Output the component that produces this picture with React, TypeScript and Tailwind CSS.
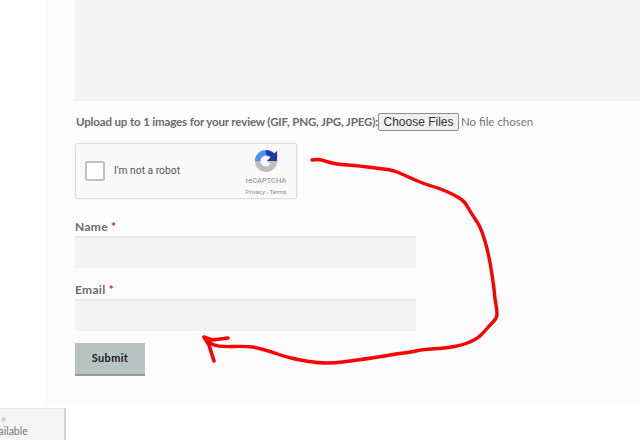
const pts: [number, number][] = [
  [312, 160], [318, 159], [325, 161], [335, 164], [348, 165], [360, 166], [375, 168], [392, 170], [402, 174],
  [415, 180], [425, 184], [438, 188], [448, 192], [458, 197], [465, 202], [471, 213], [480, 226], [484, 238],
  [487, 248], [490, 262], [492, 275], [494, 288], [495, 300], [497, 310], [497, 318], [490, 325], [484, 332],
  [478, 338], [470, 342], [462, 345], [447, 348], [430, 349], [420, 350], [412, 352], [395, 354], [385, 356],
  [365, 359], [350, 361], [335, 363], [318, 363], [300, 360], [286, 357], [272, 352], [258, 348], [247, 346],
  [218, 347], [208, 342],
];

// midpoint smoothing so the scribble doesn't look polygonal
function smooth(p: [number, number][]) {
  let d = `M${p[0][0]} ${p[0][1]}`;
  for (let i = 1; i < p.length - 1; i++) {
    d += ` Q${p[i][0]} ${p[i][1]} ${(p[i][0] + p[i + 1][0]) / 2} ${(p[i][1] + p[i + 1][1]) / 2}`;
  }
  return d + ` L${p[p.length - 1][0]} ${p[p.length - 1][1]}`;
}

function ScribbleArrow() {
  return (
    <svg className="absolute inset-0" width="640" height="440" viewBox="0 0 640 440" fill="none">
      <path d={smooth(pts)} stroke="#fe0000" strokeWidth="3.4" strokeLinecap="round" strokeLinejoin="round" />
      <path d="M214 361 L209 345 L204 337 L212 340 L228 338" stroke="#fe0000" strokeWidth="3.6" strokeLinecap="round" strokeLinejoin="round" />
    </svg>
  );
}

function RecaptchaLogo() {
  return (
    <svg width="24" height="24" viewBox="0 0 26 26" fill="none">
      <path d="M1 13 A12 12 0 0 1 13 1 L13 7 A6 6 0 0 0 7 13 Z" fill="#4a90f0" />
      <path d="M13 1 A12 12 0 0 1 22 5 L25 2 L25 13 L14 13 L18 9 A6 6 0 0 0 13 7 Z" fill="#1c3aa9" />
      <path d="M1 13 L7 13 A6 6 0 0 0 13 19 A6 6 0 0 0 18 16 L14 13 L25 13 A12 12 0 0 1 1 13 Z" fill="#bdbdbd" />
    </svg>
  );
}

function Field({ label }: { label: string }) {
  return (
    <div>
      <label className="block h-[17px] text-[12px] leading-[15px] font-bold tracking-[0.3px] text-[#6b6b6b]">
        {label} <span className="text-[#f01414]">*</span>
      </label>
      <div className="h-[32px] w-[341px] border-t-2 border-[#e8e8e8] bg-[#f2f2f2]" />
    </div>
  );
}

export default function App() {
  return (
    <div className="relative h-[440px] w-[640px] overflow-hidden bg-white font-['Lato','Noto_Sans',sans-serif]">
      <div className="ml-[45px] h-[405px] bg-[#fcfcfc] pl-[30px]">
        <div className="h-[101px] bg-[#f2f2f2]" />

        <div className="mt-[12px] flex h-[18px] items-center">
          <span className="ml-[1px] w-[302px] shrink-0 text-[11.5px] font-bold tracking-[-0.14px] whitespace-nowrap text-[#6b6b6b]">
            Upload up to 1 images for your review (GIF, PNG, JPG, JPEG):
          </span>
          <button className="h-[18px] w-[81px] shrink-0 rounded-[2px] border border-[#8f8f8f] bg-[#efefef] font-['Liberation_Sans',sans-serif] text-[12px] leading-none text-[#333]">
            Choose Files
          </button>
          <span className="ml-[2px] text-[11.5px] whitespace-nowrap text-[#757575]">No file chosen</span>
        </div>

        <div className="mt-[12px] flex h-[56px] w-[222px] items-center rounded-[2px] border border-[#dedede] bg-[#f9f9f9] pl-[9px] shadow-[0_0_3px_rgba(0,0,0,0.08)]">
          <div className="h-[20px] w-[20px] rounded-[2px] border-2 border-[#c1c1c1] bg-white" />
          <span className="ml-[9px] font-['Roboto',sans-serif] text-[10.3px] text-[#555]">I'm not a robot</span>
          <div className="ml-auto mr-[9px] flex w-[42px] flex-col items-center pt-[2px] font-['Roboto',sans-serif] text-[#8a8a8a]">
            <RecaptchaLogo />
            <span className="mt-[3px] text-[7.5px] leading-[9px]">reCAPTCHA</span>
            <span className="mt-[3px] text-[6px] leading-[8px] whitespace-nowrap">Privacy - Terms</span>
          </div>
        </div>

        <div className="mt-[20px] flex flex-col gap-[14px]">
          <Field label="Name" />
          <Field label="Email" />
        </div>

        <button className="mt-[12px] h-[33px] w-[70px] border-b-2 border-[#8fa09c] bg-[#b7c3c1] text-[11px] font-bold tracking-[0.3px] text-[#1c1c1c]">
          Submit
        </button>
      </div>

      <div className="mt-[3px] flex h-[32px] w-[66px] flex-col overflow-hidden border-t border-r-2 border-t-[#e8e8e8] border-r-[#d4d4d4] bg-[#f5f5f5] pt-[5px] text-[10.5px] leading-[14px] text-[#777]">
        <span className="text-[8px] leading-[10px] text-[#c9c9c9]">★</span>
        <span className="-ml-[12px] whitespace-nowrap">available</span>
      </div>

      <ScribbleArrow />
    </div>
  );
}
